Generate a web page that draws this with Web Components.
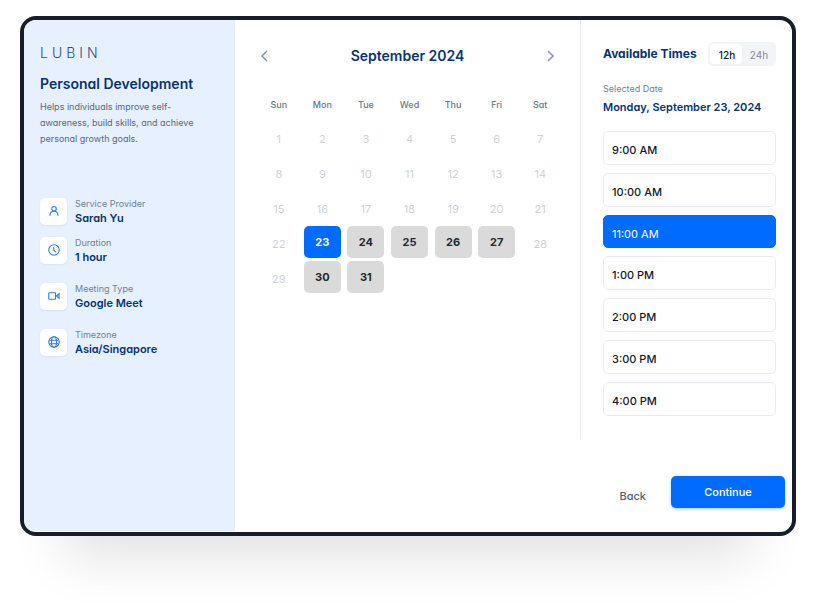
<!DOCTYPE html>
<html lang="en">
<head>
<meta charset="utf-8">
<meta name="viewport" content="width=device-width, initial-scale=1">
<title>Personal Development - Lubin</title>
<style>
  body {
    margin: 0;
    padding: 16px 20px 80px;
    background: #fff;
    color: #14181f;
    font-family: Inter, "Liberation Sans", sans-serif;
    font-size: 11px;
    line-height: 16px;
    font-feature-settings: "cv11";
    --navy: #063470;
    --blue: #006bff;
    --muted: #748094;
    --line: #e9edf2;
  }
</style>
</head>
<body>
<booking-page>
  <service-summary slot="side" brand="LUBIN" heading="Personal Development">
    Helps individuals improve self-awareness, build skills, and achieve personal growth goals.
    <info-row slot="info" icon="user" label="Service Provider">Sarah Yu</info-row>
    <info-row slot="info" icon="clock" label="Duration">1 hour</info-row>
    <info-row slot="info" icon="video" label="Meeting Type">Google Meet</info-row>
    <info-row slot="info" icon="globe" label="Timezone">Asia/Singapore</info-row>
  </service-summary>
  <month-calendar slot="calendar" heading="September 2024" days="31" open-from="23" closed="28,29" selected="23"></month-calendar>
  <time-picker slot="times" date="Monday, September 23, 2024" selected="11:00 AM"></time-picker>
  <step-actions slot="actions"></step-actions>
</booking-page>

<script>
const ICONS = {
  user: `<circle cx="12" cy="7.500" r="4.500"/><path d="M4 21.500c0-5.500 3.500-9 8-9s8 3.500 8 9"/>`,
  clock: `<circle cx="12" cy="12" r="10.500"/><path d="M11.500 6v6.500l4.500 3.500"/>`,
  video: `<rect x="1.500" y="5.500" width="13.500" height="13" rx="1"/><path d="M17 12l5-4.500v9z"/>`,
  globe: `<circle cx="12" cy="12" r="10.500"/><path d="M2.500 8.500h19M2.500 15.500h19"/><ellipse cx="12" cy="12" rx="5" ry="10.500"/>`,
};

class BookingPage extends HTMLElement {
  constructor() {
    super();
    this.attachShadow({ mode: "open" }).innerHTML = `
      <style>
        :host { display: block; }
        main {
          display: grid;
          grid-template-columns: 211px 1fr 212px;
          grid-template-rows: auto 1fr;
          padding-bottom: 1px;
          overflow: hidden;
          border: 4px solid #171e2a;
          border-radius: 16px;
          background: #fff;
          box-shadow: 0 64px 52px -44px rgba(0, 0, 0, 0.12);
        }
        .side { display: grid; grid-row: 1 / 3; background: #e6f0ff; }
        .times { border-left: 1px solid var(--line); }
        .actions { grid-column: 2 / 4; }
      </style>
      <main>
        <div class="side"><slot name="side"></slot></div>
        <slot name="calendar"></slot>
        <div class="times"><slot name="times"></slot></div>
        <div class="actions"><slot name="actions"></slot></div>
      </main>
    `;
  }
}

class ServiceSummary extends HTMLElement {
  connectedCallback() {
    this.attachShadow({ mode: "open" }).innerHTML = `
      <style>
        :host { display: block; padding: 25px 16px; }
        .brand {
          color: #2b4f83;
          font-size: 14px;
          font-weight: 300;
          letter-spacing: 4px;
        }
        h1 {
          margin: 15px 0 7px;
          color: var(--navy);
          font-size: 14px;
          font-weight: 600;
          line-height: 16px;
        }
        p {
          margin: 0;
          color: #5b687d;
          font-size: 9px;
        }
        .info { display: flex; flex-direction: column; margin-top: 49px; }
      </style>
      <div class="brand">${this.getAttribute("brand")}</div>
      <h1>${this.getAttribute("heading")}</h1>
      <p><slot></slot></p>
      <div class="info"><slot name="info"></slot></div>
    `;
  }
}

class InfoRow extends HTMLElement {
  connectedCallback() {
    this.attachShadow({ mode: "open" }).innerHTML = `
      <style>
        :host { display: flex; align-items: center; gap: 8px; margin-bottom: 16px; }
        :host([icon="user"]) { margin-bottom: 9px; }
        .icon {
          display: grid;
          place-items: center;
          width: 27px;
          height: 27px;
          border-radius: 5px;
          background: #fff;
          box-shadow: 0 1px 2px rgba(30, 70, 130, 0.08);
        }
        svg {
          width: 12px;
          height: 12px;
          fill: none;
          stroke: #2b7df0;
          stroke-width: 2.2;
        }
        .text { line-height: 15px; }
        .label { color: var(--muted); font-size: 9px; }
        .value { color: var(--navy); font-weight: 600; }
      </style>
      <span class="icon"><svg viewBox="0 0 24 24" aria-hidden="true">${ICONS[this.getAttribute("icon")]}</svg></span>
      <div class="text">
        <div class="label">${this.getAttribute("label")}</div>
        <div class="value"><slot></slot></div>
      </div>
    `;
  }
}

class MonthCalendar extends HTMLElement {
  connectedCallback() {
    this.attachShadow({ mode: "open" });
    this.shadowRoot.innerHTML = `
      <style>
        :host { display: block; padding: 26px 18px 0 22px; }
        header {
          display: flex;
          align-items: center;
          justify-content: space-between;
          padding-right: 4px;
        }
        h2 {
          margin: 0;
          color: var(--navy);
          font-size: 14px;
          font-weight: 600;
          line-height: 20px;
        }
        button {
          padding: 0;
          border: 0;
          background: none;
          font: inherit;
          font-feature-settings: inherit;
        }
        .nav { width: 16px; height: 18px; }
        .nav svg {
          display: block;
          width: 16px;
          height: 16px;
          fill: none;
          stroke: #8b93a3;
          stroke-width: 1.5;
        }
        table {
          display: block;
          margin-top: 31px;
        }
        thead, tbody { display: grid; row-gap: 3px; }
        thead { color: #6b7688; font-size: 9px; font-weight: 500; }
        tbody { margin-top: 8px; }
        tr { display: grid; grid-template-columns: repeat(7, 1fr); }
        th { padding: 0; font-weight: inherit; text-align: center; }
        td { display: grid; justify-content: center; height: 32px; padding: 0; }
        td button {
          width: 37px;
          height: 32px;
          padding-top: 4px;
          border-radius: 5px;
          color: #ced2d8;
          text-align: center;
        }
        td button:enabled {
          padding-top: 0;
          background: #dadada;
          color: #25282d;
          font-weight: 700;
          cursor: pointer;
        }
        td button:enabled[aria-pressed="true"] { background: var(--blue); color: #fff; }
      </style>
      <header>
        <button class="nav" type="button" aria-label="Previous month">
          <svg viewBox="0 0 16 16"><path d="M10 3L5 8l5 5"/></svg>
        </button>
        <h2>${this.getAttribute("heading")}</h2>
        <button class="nav" type="button" aria-label="Next month">
          <svg viewBox="0 0 16 16"><path d="M6 3l5 5-5 5"/></svg>
        </button>
      </header>
      <table>
        <thead>
          <tr>${["Sun", "Mon", "Tue", "Wed", "Thu", "Fri", "Sat"].map((d) => `<th scope="col">${d}</th>`).join("")}</tr>
        </thead>
        <tbody>${this._weeks()}</tbody>
      </table>
    `;

    this.shadowRoot.querySelector("tbody").addEventListener("click", (e) => {
      const button = e.target.closest("button:enabled");
      if (!button) return;
      this.shadowRoot
        .querySelectorAll("td button")
        .forEach((b) => b.setAttribute("aria-pressed", String(b === button)));
    });
  }

  _weeks() {
    const count = Number(this.getAttribute("days"));
    const from = Number(this.getAttribute("open-from"));
    const closed = this.getAttribute("closed").split(",").map(Number);
    const selected = Number(this.getAttribute("selected"));
    let html = "";
    for (let start = 1; start <= count; start += 7) {
      html += "<tr>";
      for (let day = start; day < start + 7 && day <= count; day++) {
        const open = day >= from && !closed.includes(day);
        html += `<td><button type="button" ${open ? "" : "disabled"} aria-pressed="${day === selected}">${day}</button></td>`;
      }
      html += "</tr>";
    }
    return html;
  }
}

class TimePicker extends HTMLElement {
  connectedCallback() {
    const times = ["9:00 AM", "10:00 AM", "11:00 AM", "1:00 PM", "2:00 PM", "3:00 PM", "4:00 PM"];
    const selected = this.getAttribute("selected");
    this.attachShadow({ mode: "open" });
    this.shadowRoot.innerHTML = `
      <style>
        :host { display: block; padding: 22px 16px 23px 22px; }
        header { display: flex; align-items: center; justify-content: space-between; }
        h2 {
          margin: 0;
          color: var(--navy);
          font-size: 12px;
          font-weight: 700;
          white-space: nowrap;
        }
        button {
          border: 0;
          font: inherit;
          font-feature-settings: inherit;
          cursor: pointer;
        }
        .format {
          display: flex;
          padding: 2px;
          border-radius: 5px;
          background: #f3f4f6;
        }
        .format button {
          width: 32px;
          height: 20px;
          padding: 2px 0 0 2px;
          border-radius: 4px;
          background: none;
          color: #848b97;
          font-size: 10px;
        }
        .format button[aria-pressed="true"] {
          background: #fff;
          color: #14181f;
          font-weight: 500;
        }
        .label { margin-top: 15px; color: var(--muted); font-size: 9px; }
        .date { margin-top: 2px; color: var(--navy); font-weight: 600; white-space: nowrap; }
        .slots { display: grid; gap: 8px; margin-top: 16px; }
        .slots button {
          height: 34px;
          padding: 4px 8px 0;
          border: 1px solid var(--line);
          border-radius: 5px;
          background: #fff;
          color: inherit;
          font-weight: 500;
          text-align: left;
        }
        .slots button[aria-pressed="true"] {
          height: 33px;
          border-color: var(--blue);
          background: var(--blue);
          color: #fff;
          font-weight: 400;
        }
      </style>
      <header>
        <h2>Available Times</h2>
        <div class="format" role="group" aria-label="Time format">
          <button type="button" aria-pressed="true">12h</button>
          <button type="button" aria-pressed="false">24h</button>
        </div>
      </header>
      <div class="label">Selected Date</div>
      <div class="date">${this.getAttribute("date")}</div>
      <div class="slots" role="group" aria-label="Available times">
        ${times.map((t) => `<button type="button" aria-pressed="${t === selected}">${t}</button>`).join("")}
      </div>
    `;

    this.shadowRoot.querySelectorAll("[role=group]").forEach((group) => {
      group.addEventListener("click", (e) => {
        const button = e.target.closest("button");
        if (!button) return;
        group
          .querySelectorAll("button")
          .forEach((b) => b.setAttribute("aria-pressed", String(b === button)));
      });
    });
  }
}

class StepActions extends HTMLElement {
  constructor() {
    super();
    this.attachShadow({ mode: "open" }).innerHTML = `
      <style>
        :host {
          display: flex;
          align-items: flex-end;
          justify-content: flex-end;
          gap: 25px;
          padding: 37px 7px 23px;
        }
        button {
          border: 0;
          font: inherit;
          font-feature-settings: inherit;
          font-weight: 500;
          cursor: pointer;
        }
        .back { height: 24px; padding: 0; background: none; color: #566173; }
        .next {
          width: 114px;
          height: 32px;
          border-radius: 5px;
          background: var(--blue);
          color: #fff;
          box-shadow: 0 1px 3px rgba(0, 107, 255, 0.4);
        }
      </style>
      <button class="back" type="button">Back</button>
      <button class="next" type="button">Continue</button>
    `;
  }
}

customElements.define("booking-page", BookingPage);
customElements.define("service-summary", ServiceSummary);
customElements.define("info-row", InfoRow);
customElements.define("month-calendar", MonthCalendar);
customElements.define("time-picker", TimePicker);
customElements.define("step-actions", StepActions);
</script>
</body>
</html>
